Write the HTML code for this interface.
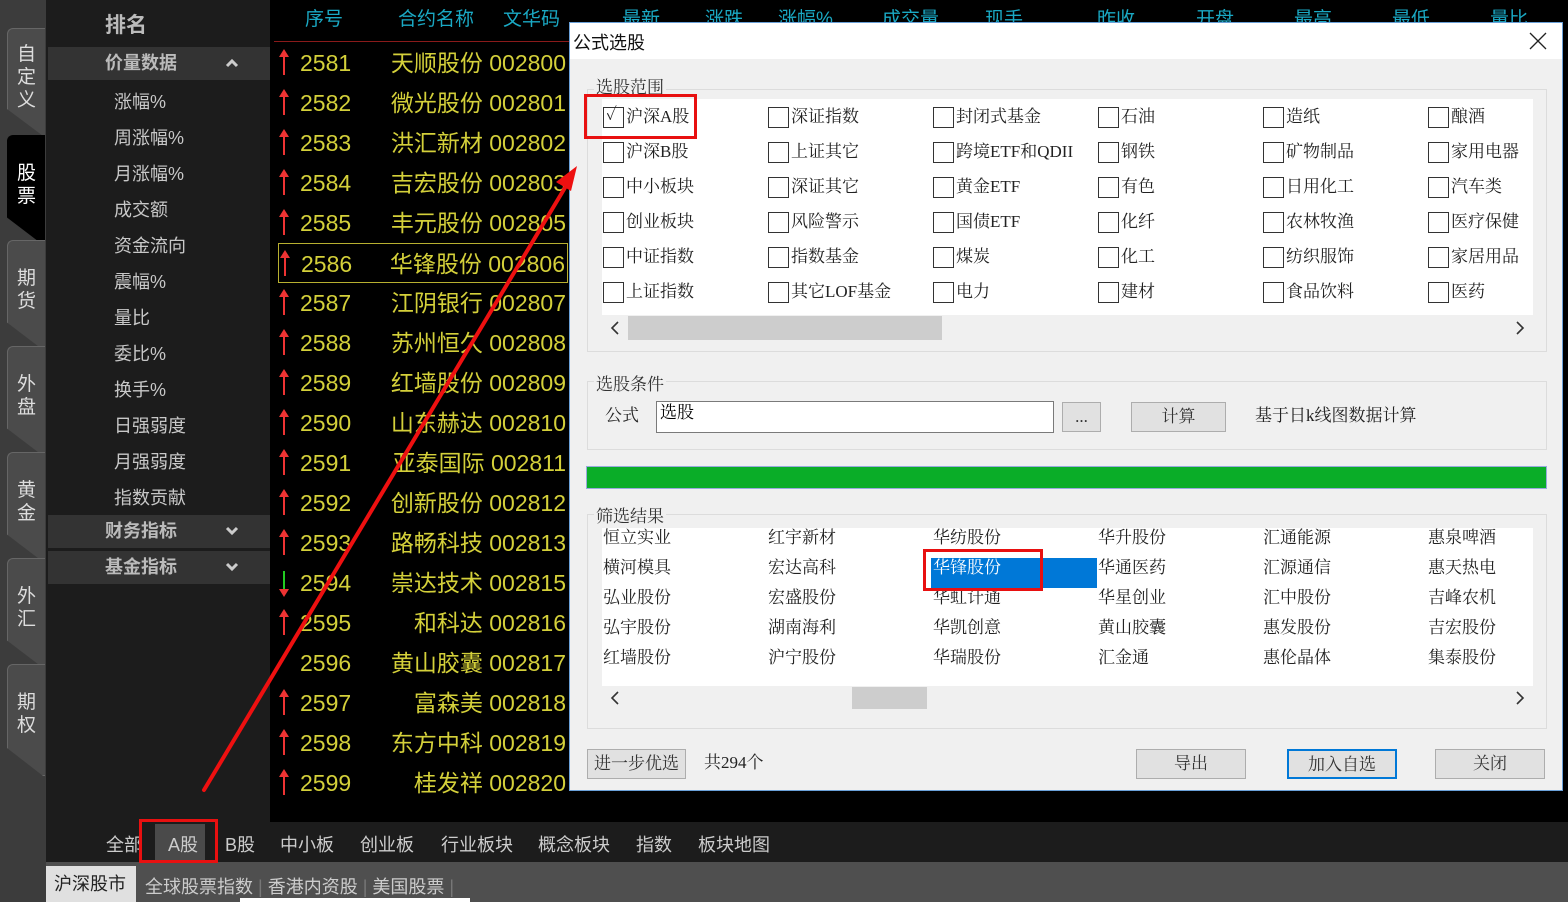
<!DOCTYPE html>
<html><head><meta charset="utf-8"><style>
*{margin:0;padding:0;box-sizing:border-box}
body{width:1568px;height:902px;overflow:hidden;background:#000;position:relative;font-family:"Liberation Sans","Noto Sans CJK SC",sans-serif}
.a{position:absolute;white-space:nowrap}
.tab{position:absolute;left:7px;width:38px;background:#4b4b4b;border:1px solid #666;border-right:none;border-radius:6px 0 0 0;color:#ddd;font-size:19px;line-height:23px;text-align:center;padding-top:14px;clip-path:polygon(0 0,100% 0,100% 100%,95% 100%,0 75%)}
.mi{position:absolute;left:114px;color:#c8c8c8;font-size:18px}
.mh{position:absolute;left:48px;width:222px;height:33px;background:#333;color:#bbb;font-weight:bold;font-size:18px;line-height:33px;padding-left:57px}
.mh svg{position:absolute;left:177px;top:11px}
.row{position:absolute;left:278px;width:290px;height:40px;color:#d4d03a;font-size:23px;line-height:40px}
.row .ar{position:absolute;left:5px;top:8px;width:2px;height:24px;background:#e33}
.row .ar:before{content:"";position:absolute;left:-4px;top:-2px;border:5px solid transparent;border-bottom:8px solid #e33;border-top:0}
.row .n{position:absolute;left:22px}
.row .c{position:absolute;right:2px}
.hd{position:absolute;top:4px;color:#1aa9c4;font-size:19px}
.cb{position:absolute;font-size:17px;line-height:22px;padding-left:23px;font-family:"Liberation Serif","Noto Serif CJK SC",serif;color:#222}
.cb:before{content:"";position:absolute;left:0;top:1px;width:19px;height:19px;border:1px solid #333;background:#fff}
.rs{position:absolute;font-size:17px;font-family:"Liberation Serif","Noto Serif CJK SC",serif;color:#222;line-height:22px}
.btn{position:absolute;height:30px;background:#e1e1e1;border:1px solid #adadad;font-size:17px;line-height:28px;text-align:center;color:#333;font-family:"Liberation Serif","Noto Serif CJK SC",serif}
.grp{position:absolute;border:1px solid #dcdcdc}
.gl{position:absolute;background:#f0f0f0;font-size:17px;color:#333;padding:0 2px;font-family:"Liberation Serif","Noto Serif CJK SC",serif}
.bt{position:absolute;top:831px;color:#ccc;font-size:18px}
</style></head><body>
<div class="a" style="left:0;top:0;width:46px;height:902px;background:#3c3c3c"></div>
<div class="tab" style="top:28px;height:108px">自<br>定<br>义</div>
<div class="tab" style="top:135px;height:110px;background:#000;border-color:#000;color:#fff;padding-top:26px">股<br>票</div>
<div class="tab" style="top:240px;height:110px;padding-top:26px">期<br>货</div>
<div class="tab" style="top:346px;height:110px;padding-top:26px">外<br>盘</div>
<div class="tab" style="top:452px;height:110px;padding-top:26px">黄<br>金</div>
<div class="tab" style="top:558px;height:110px;padding-top:26px">外<br>汇</div>
<div class="tab" style="top:664px;height:112px;padding-top:26px">期<br>权</div>
<div class="a" style="left:46px;top:0;width:224px;height:822px;background:#1c1c1c"></div>
<div class="a" style="left:105px;top:9px;color:#bbb;font-size:21px;font-weight:bold">排名</div>
<div class="mh" style="top:47px">价量数据<svg width="14" height="10"><path d="M2 8 L7 3 L12 8" stroke="#ccc" stroke-width="3" fill="none"/></svg></div>
<div class="mi" style="top:88px">涨幅%</div>
<div class="mi" style="top:124px">周涨幅%</div>
<div class="mi" style="top:160px">月涨幅%</div>
<div class="mi" style="top:196px">成交额</div>
<div class="mi" style="top:232px">资金流向</div>
<div class="mi" style="top:268px">震幅%</div>
<div class="mi" style="top:304px">量比</div>
<div class="mi" style="top:340px">委比%</div>
<div class="mi" style="top:376px">换手%</div>
<div class="mi" style="top:412px">日强弱度</div>
<div class="mi" style="top:448px">月强弱度</div>
<div class="mi" style="top:484px">指数贡献</div>
<div class="mh" style="top:515px">财务指标<svg width="14" height="10"><path d="M2 2 L7 7 L12 2" stroke="#ccc" stroke-width="3" fill="none"/></svg></div>
<div class="mh" style="top:551px">基金指标<svg width="14" height="10"><path d="M2 2 L7 7 L12 2" stroke="#ccc" stroke-width="3" fill="none"/></svg></div>
<div class="hd" style="left:305px">序号</div>
<div class="hd" style="left:398px">合约名称</div>
<div class="hd" style="left:503px">文华码</div>
<div class="hd" style="left:622px">最新</div><div class="hd" style="left:705px">涨跌</div><div class="hd" style="left:778px">涨幅%</div><div class="hd" style="left:882px">成交量</div><div class="hd" style="left:985px">现手</div><div class="hd" style="left:1097px">昨收</div><div class="hd" style="left:1196px">开盘</div><div class="hd" style="left:1294px">最高</div><div class="hd" style="left:1392px">最低</div><div class="hd" style="left:1490px">量比</div>
<div class="a" style="left:274px;top:41px;width:300px;height:1px;background:#8a1a1a"></div>
<div class="row" style="top:43px"><i class="ar"></i><span class="n">2581</span><span class="c">天顺股份 002800</span></div>
<div class="row" style="top:83px"><i class="ar"></i><span class="n">2582</span><span class="c">微光股份 002801</span></div>
<div class="row" style="top:123px"><i class="ar"></i><span class="n">2583</span><span class="c">洪汇新材 002802</span></div>
<div class="row" style="top:163px"><i class="ar"></i><span class="n">2584</span><span class="c">吉宏股份 002803</span></div>
<div class="row" style="top:203px"><i class="ar"></i><span class="n">2585</span><span class="c">丰元股份 002805</span></div>
<div class="row" style="top:243px;border:1px solid #b8b030"><i class="ar"></i><span class="n">2586</span><span class="c">华锋股份 002806</span></div>
<div class="row" style="top:283px"><i class="ar"></i><span class="n">2587</span><span class="c">江阴银行 002807</span></div>
<div class="row" style="top:323px"><i class="ar"></i><span class="n">2588</span><span class="c">苏州恒久 002808</span></div>
<div class="row" style="top:363px"><i class="ar"></i><span class="n">2589</span><span class="c">红墙股份 002809</span></div>
<div class="row" style="top:403px"><i class="ar"></i><span class="n">2590</span><span class="c">山东赫达 002810</span></div>
<div class="row" style="top:443px"><i class="ar"></i><span class="n">2591</span><span class="c">亚泰国际 002811</span></div>
<div class="row" style="top:483px"><i class="ar"></i><span class="n">2592</span><span class="c">创新股份 002812</span></div>
<div class="row" style="top:523px"><i class="ar"></i><span class="n">2593</span><span class="c">路畅科技 002813</span></div>
<div class="row" style="top:563px"><i class="ar" style="background:#2c2;transform:rotate(180deg)"></i><span class="n">2594</span><span class="c">崇达技术 002815</span></div>
<div class="row" style="top:603px"><i class="ar"></i><span class="n">2595</span><span class="c">和科达 002816</span></div>
<div class="row" style="top:643px"><span class="n">2596</span><span class="c">黄山胶囊 002817</span></div>
<div class="row" style="top:683px"><i class="ar"></i><span class="n">2597</span><span class="c">富森美 002818</span></div>
<div class="row" style="top:723px"><i class="ar"></i><span class="n">2598</span><span class="c">东方中科 002819</span></div>
<div class="row" style="top:763px"><i class="ar"></i><span class="n">2599</span><span class="c">桂发祥 002820</span></div>
<div class="a" style="left:46px;top:822px;width:1522px;height:40px;background:#1c1c1c"></div>
<div class="a" style="left:155px;top:824px;width:50px;height:38px;background:#4a4a4a"></div>
<div class="bt" style="left:106px">全部</div><div class="bt" style="left:168px">A股</div><div class="bt" style="left:225px">B股</div><div class="bt" style="left:280px">中小板</div><div class="bt" style="left:360px">创业板</div><div class="bt" style="left:441px">行业板块</div><div class="bt" style="left:538px">概念板块</div><div class="bt" style="left:636px">指数</div><div class="bt" style="left:698px">板块地图</div>
<div class="a" style="left:46px;top:862px;width:1522px;height:40px;background:#4f4f4f"></div>
<div class="a" style="left:46px;top:866px;width:90px;height:36px;background:#e0e0e0;color:#222;font-size:18px;line-height:36px;padding-left:8px">沪深股市</div>
<div class="a" style="left:145px;top:873px;color:#ccc;font-size:18px">全球股票指数 <span style="color:#777">|</span> 香港内资股 <span style="color:#777">|</span> 美国股票 <span style="color:#777">|</span></div>
<div class="a" style="left:240px;top:898px;width:230px;height:4px;background:#fff"></div>
<div class="a" style="left:569px;top:22px;width:994px;height:769px;background:#f0f0f0;border:1px solid #6aa0d8"></div>
<div class="a" style="left:570px;top:23px;width:992px;height:36px;background:#fff"></div>
<div class="a" style="left:573px;top:29px;font-size:18px;color:#111">公式选股</div>
<svg class="a" style="left:1529px;top:32px" width="18" height="18"><path d="M1 1 L17 17 M17 1 L1 17" stroke="#222" stroke-width="1.3"/></svg>
<div class="grp" style="left:587px;top:89px;width:960px;height:263px"></div>
<div class="gl" style="left:594px;top:73px">选股范围</div>
<div class="a" style="left:602px;top:99px;width:931px;height:216px;background:#fff"></div>
<div class="a" style="left:628px;top:316px;width:314px;height:24px;background:#cdcdcd"></div>
<svg class="a" style="left:610px;top:321px" width="10" height="14"><path d="M8 1 L2 7 L8 13" stroke="#333" stroke-width="1.6" fill="none"/></svg>
<svg class="a" style="left:1515px;top:321px" width="10" height="14"><path d="M2 1 L8 7 L2 13" stroke="#333" stroke-width="1.6" fill="none"/></svg>
<div class="cb" style="left:603px;top:106px">沪深A股<span style="position:absolute;left:3px;top:-2px;font-size:17px">✓</span></div>
<div class="cb" style="left:603px;top:141px">沪深B股</div><div class="cb" style="left:603px;top:176px">中小板块</div><div class="cb" style="left:603px;top:211px">创业板块</div><div class="cb" style="left:603px;top:246px">中证指数</div><div class="cb" style="left:603px;top:281px">上证指数</div>
<div class="cb" style="left:768px;top:106px">深证指数</div><div class="cb" style="left:768px;top:141px">上证其它</div><div class="cb" style="left:768px;top:176px">深证其它</div><div class="cb" style="left:768px;top:211px">风险警示</div><div class="cb" style="left:768px;top:246px">指数基金</div><div class="cb" style="left:768px;top:281px">其它LOF基金</div>
<div class="cb" style="left:933px;top:106px">封闭式基金</div><div class="cb" style="left:933px;top:141px">跨境ETF和QDII</div><div class="cb" style="left:933px;top:176px">黄金ETF</div><div class="cb" style="left:933px;top:211px">国债ETF</div><div class="cb" style="left:933px;top:246px">煤炭</div><div class="cb" style="left:933px;top:281px">电力</div>
<div class="cb" style="left:1098px;top:106px">石油</div><div class="cb" style="left:1098px;top:141px">钢铁</div><div class="cb" style="left:1098px;top:176px">有色</div><div class="cb" style="left:1098px;top:211px">化纤</div><div class="cb" style="left:1098px;top:246px">化工</div><div class="cb" style="left:1098px;top:281px">建材</div>
<div class="cb" style="left:1263px;top:106px">造纸</div><div class="cb" style="left:1263px;top:141px">矿物制品</div><div class="cb" style="left:1263px;top:176px">日用化工</div><div class="cb" style="left:1263px;top:211px">农林牧渔</div><div class="cb" style="left:1263px;top:246px">纺织服饰</div><div class="cb" style="left:1263px;top:281px">食品饮料</div>
<div class="cb" style="left:1428px;top:106px">酿酒</div><div class="cb" style="left:1428px;top:141px">家用电器</div><div class="cb" style="left:1428px;top:176px">汽车类</div><div class="cb" style="left:1428px;top:211px">医疗保健</div><div class="cb" style="left:1428px;top:246px">家居用品</div><div class="cb" style="left:1428px;top:281px">医药</div>
<div class="grp" style="left:587px;top:381px;width:960px;height:69px"></div>
<div class="gl" style="left:594px;top:370px">选股条件</div>
<div class="rs" style="left:605px;top:405px">公式</div>
<div class="a" style="left:656px;top:401px;width:398px;height:32px;background:#fff;border:1px solid #7a7a7a;font-family:'Liberation Serif','Noto Serif CJK SC',serif;font-size:17px;padding-left:3px;line-height:22px">选股</div>
<div class="btn" style="left:1062px;top:402px;width:39px">...</div>
<div class="btn" style="left:1131px;top:402px;width:95px">计算</div>
<div class="rs" style="left:1255px;top:405px">基于日k线图数据计算</div>
<div class="a" style="left:586px;top:466px;width:961px;height:23px;background:#0aad28;border:1px solid #9ad"></div>
<div class="grp" style="left:587px;top:514px;width:960px;height:215px"></div>
<div class="gl" style="left:594px;top:502px">筛选结果</div>
<div class="a" style="left:602px;top:528px;width:931px;height:158px;background:#fff"></div>
<div class="a" style="left:931px;top:558px;width:166px;height:30px;background:#0078d7"></div>
<div class="a" style="left:852px;top:687px;width:75px;height:22px;background:#cdcdcd"></div>
<svg class="a" style="left:610px;top:691px" width="10" height="14"><path d="M8 1 L2 7 L8 13" stroke="#333" stroke-width="1.6" fill="none"/></svg>
<svg class="a" style="left:1515px;top:691px" width="10" height="14"><path d="M2 1 L8 7 L2 13" stroke="#333" stroke-width="1.6" fill="none"/></svg>
<div class="rs" style="left:603px;top:527px">恒立实业</div><div class="rs" style="left:603px;top:557px">横河模具</div><div class="rs" style="left:603px;top:587px">弘业股份</div><div class="rs" style="left:603px;top:617px">弘宇股份</div><div class="rs" style="left:603px;top:647px">红墙股份</div>
<div class="rs" style="left:768px;top:527px">红宇新材</div><div class="rs" style="left:768px;top:557px">宏达高科</div><div class="rs" style="left:768px;top:587px">宏盛股份</div><div class="rs" style="left:768px;top:617px">湖南海利</div><div class="rs" style="left:768px;top:647px">沪宁股份</div>
<div class="rs" style="left:933px;top:527px">华纺股份</div><div class="rs" style="left:933px;top:557px;color:#fff">华锋股份</div><div class="rs" style="left:933px;top:587px">华虹计通</div><div class="rs" style="left:933px;top:617px">华凯创意</div><div class="rs" style="left:933px;top:647px">华瑞股份</div>
<div class="rs" style="left:1098px;top:527px">华升股份</div><div class="rs" style="left:1098px;top:557px">华通医药</div><div class="rs" style="left:1098px;top:587px">华星创业</div><div class="rs" style="left:1098px;top:617px">黄山胶囊</div><div class="rs" style="left:1098px;top:647px">汇金通</div>
<div class="rs" style="left:1263px;top:527px">汇通能源</div><div class="rs" style="left:1263px;top:557px">汇源通信</div><div class="rs" style="left:1263px;top:587px">汇中股份</div><div class="rs" style="left:1263px;top:617px">惠发股份</div><div class="rs" style="left:1263px;top:647px">惠伦晶体</div>
<div class="rs" style="left:1428px;top:527px">惠泉啤酒</div><div class="rs" style="left:1428px;top:557px">惠天热电</div><div class="rs" style="left:1428px;top:587px">吉峰农机</div><div class="rs" style="left:1428px;top:617px">吉宏股份</div><div class="rs" style="left:1428px;top:647px">集泰股份</div>
<div class="btn" style="left:587px;top:749px;width:99px">进一步优选</div>
<div class="rs" style="left:704px;top:752px">共294个</div>
<div class="btn" style="left:1136px;top:749px;width:110px">导出</div>
<div class="btn" style="left:1287px;top:749px;width:110px;border:2px solid #0078d7">加入自选</div>
<div class="btn" style="left:1435px;top:749px;width:110px">关闭</div>
<div class="a" style="left:584px;top:94px;width:113px;height:45px;border:3px solid #e81010"></div>
<div class="a" style="left:923px;top:549px;width:120px;height:42px;border:3px solid #e81010"></div>
<div class="a" style="left:139px;top:819px;width:79px;height:44px;border:3px solid #e81010"></div>
<svg class="a" style="left:0;top:0" width="1568" height="902"><line x1="204" y1="790" x2="566" y2="186" stroke="#ee1010" stroke-width="4" stroke-linecap="round"/><polygon points="577,166 556,182 571,191" fill="#ee1010"/></svg>
</body></html>
